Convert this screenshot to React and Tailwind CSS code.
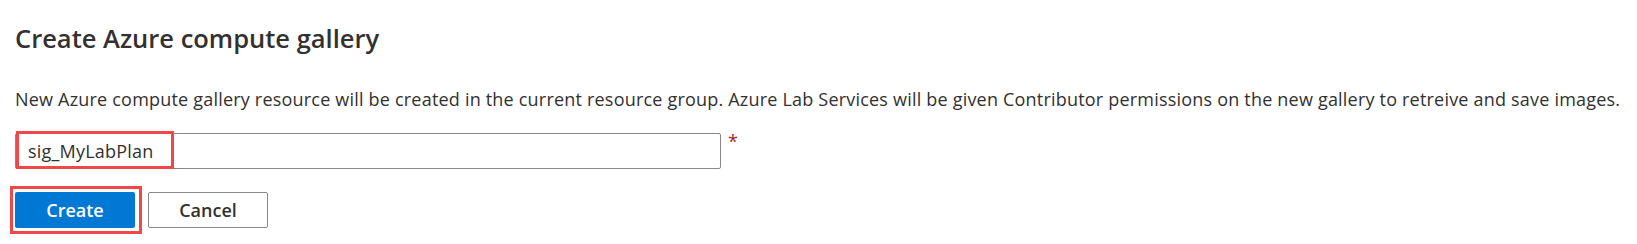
import React from "react";

const App = () => {
  return (
    <div
      className="w-full h-[244px] bg-white pl-[15px] pt-[21px] text-[#323130]"
      style={{ fontFamily: '"Open Sans", "Noto Sans", sans-serif' }}
    >
      <h1 className="text-[25.5px] leading-[34px] font-semibold">Create Azure compute gallery</h1>

      <p className="mt-[32px] text-[18px] leading-[24px] tracking-[0.2px]">
        New Azure compute gallery resource will be created in the current resource group. Azure Lab Services will be
        given Contributor permissions on the new gallery to retreive and save images.
      </p>

      <div className="mt-[22px] flex items-start">
        <div className="relative flex items-center w-[706px] h-[36px] border border-[#8a8886] rounded-[2px] px-[12px] text-[18px] leading-[24px] tracking-[0.2px]">
          sig_MyLabPlan
          {/* highlight */}
          <span className="absolute left-[0px] top-[-3px] w-[158px] h-[38px] border-[3px] border-[#f04848]" />
        </div>
        <span className="ml-[7px] mt-[-4px] text-[#a4262c] text-[18px] leading-[24px]">*</span>
      </div>

      <div className="mt-[23px] flex gap-[13px]">
        <div className="relative">
          <button className="w-[120px] h-[36px] rounded-[2px] bg-[#0078d4] text-white text-[18px] font-semibold">
            Create
          </button>
          <span className="absolute left-[-5px] top-[-6px] right-[-7px] bottom-[-6px] border-[3px] border-[#f04848]" />
        </div>
        <button className="w-[120px] h-[36px] rounded-[2px] border border-[#8a8886] bg-white text-[#323130] text-[18px] font-semibold">
          Cancel
        </button>
      </div>
    </div>
  );
};

export default App;
